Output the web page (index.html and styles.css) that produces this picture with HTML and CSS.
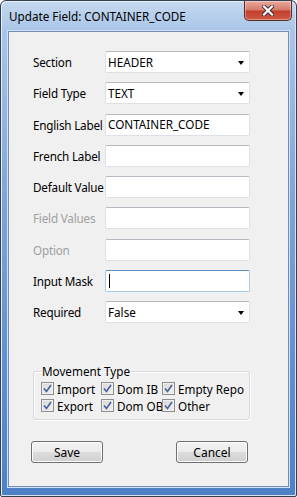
FILE: index.html
```html
<!DOCTYPE html>
<html lang="en">
<head>
    <meta charset="UTF-8">
    <meta name="viewport" content="width=device-width, initial-scale=1.0">
    <title>Update Field</title>
    <link rel="stylesheet" href="styles.css">
</head>
<body>
    <div class="window">
        <div class="titlebar">
            <span class="title">Update Field: CONTAINER_CODE</span>
            <button class="close" aria-label="Close">
                <svg width="12" height="11" viewBox="0 0 12 11">
                    <path d="M2 1.5 L10 9.5 M10 1.5 L2 9.5" stroke="#3b2a2a" stroke-width="4" stroke-linecap="square"/>
                    <path d="M2 1.5 L10 9.5 M10 1.5 L2 9.5" stroke="#fff" stroke-width="2.2" stroke-linecap="square"/>
                </svg>
            </button>
        </div>

        <div class="client">
            <div class="form">
                <div class="row">
                    <label class="label">Section</label>
                    <div class="field combo">HEADER<span class="arrow"></span></div>
                </div>
                <div class="row">
                    <label class="label">Field Type</label>
                    <div class="field combo">TEXT<span class="arrow"></span></div>
                </div>
                <div class="row">
                    <label class="label">English Label</label>
                    <div class="field">CONTAINER_CODE</div>
                </div>
                <div class="row">
                    <label class="label">French Label</label>
                    <div class="field"></div>
                </div>
                <div class="row">
                    <label class="label">Default Value</label>
                    <div class="field"></div>
                </div>
                <div class="row">
                    <label class="label disabled">Field Values</label>
                    <div class="field"></div>
                </div>
                <div class="row">
                    <label class="label disabled">Option</label>
                    <div class="field"></div>
                </div>
                <div class="row">
                    <label class="label">Input Mask</label>
                    <div class="field focused"><span class="caret"></span></div>
                </div>
                <div class="row">
                    <label class="label">Required</label>
                    <div class="field combo">False<span class="arrow"></span></div>
                </div>
            </div>

            <fieldset class="group">
                <legend>Movement Type</legend>
                <div class="checks">
                    <label class="check"><span class="box"><svg width="9" height="9" viewBox="0 0 9 9"><path d="M1 4.5 L3.5 7.5 L8 1" fill="none" stroke="#4a5f9a" stroke-width="1.6"/></svg></span>Import</label>
                    <label class="check"><span class="box"><svg width="9" height="9" viewBox="0 0 9 9"><path d="M1 4.5 L3.5 7.5 L8 1" fill="none" stroke="#4a5f9a" stroke-width="1.6"/></svg></span>Dom IB</label>
                    <label class="check"><span class="box"><svg width="9" height="9" viewBox="0 0 9 9"><path d="M1 4.5 L3.5 7.5 L8 1" fill="none" stroke="#4a5f9a" stroke-width="1.6"/></svg></span>Empty Repo</label>
                    <label class="check"><span class="box"><svg width="9" height="9" viewBox="0 0 9 9"><path d="M1 4.5 L3.5 7.5 L8 1" fill="none" stroke="#4a5f9a" stroke-width="1.6"/></svg></span>Export</label>
                    <label class="check"><span class="box"><svg width="9" height="9" viewBox="0 0 9 9"><path d="M1 4.5 L3.5 7.5 L8 1" fill="none" stroke="#4a5f9a" stroke-width="1.6"/></svg></span>Dom OB</label>
                    <label class="check"><span class="box"><svg width="9" height="9" viewBox="0 0 9 9"><path d="M1 4.5 L3.5 7.5 L8 1" fill="none" stroke="#4a5f9a" stroke-width="1.6"/></svg></span>Other</label>
                </div>
            </fieldset>

            <div class="buttons">
                <button class="button">Save</button>
                <button class="button">Cancel</button>
            </div>
        </div>
    </div>
</body>
</html>
```

FILE: styles.css
```css
body {
    margin: 0;
    background: #fff;
    font-family: "Noto Sans", "Open Sans", sans-serif;
    font-size: 11.7px;
    color: #000;
}

.window {
    box-sizing: border-box;
    width: 297px;
    height: 497px;
    display: flex;
    flex-direction: column;
    border: 1px solid #34404f;
    border-radius: 6px 6px 2px 2px;
    background: linear-gradient(to bottom, #c5d9f0 0, #a9c5e8 30px, #7ea5da 40%, #5f8fd0 75%, #4f80c6 100%);
    box-shadow: inset 1px 1px 0 #e4eef9, inset -1px -1px 0 #d6e4f5;
}

.titlebar {
    height: 30px;
    display: flex;
    align-items: flex-start;
    justify-content: space-between;
    padding-left: 8px;
    padding-right: 4px;
}

.title {
    margin-top: 7px;
    line-height: 16px;
    color: #000;
}

.close {
    width: 48px;
    height: 20px;
    padding: 0;
    border: 1px solid #5a2a24;
    border-top: none;
    border-radius: 0 0 5px 5px;
    background: linear-gradient(to bottom, #e8aa9e 0, #d77c6c 45%, #c3402d 55%, #cf5a44 100%);
    display: flex;
    align-items: center;
    justify-content: center;
    box-shadow: inset 0 0 0 1px rgba(255, 255, 255, 0.35);
}

.client {
    flex: 1;
    margin: 0 7px 9px;
    border: 1px solid #6f8db8;
    background: #f0f0f0;
    box-shadow: 0 0 0 1px #d3e1f3;
    padding: 19px 0 0 24px;
}

.form {
    display: flex;
    flex-direction: column;
    gap: 9.25px;
}

.row {
    display: flex;
    align-items: center;
    height: 22px;
}

.label {
    width: 72px;
    flex: none;
    white-space: nowrap;
    letter-spacing: -0.2px;
}

.label.disabled {
    color: #a0a0a0;
}

.field {
    box-sizing: border-box;
    position: relative;
    width: 145px;
    height: 22px;
    background: #fff;
    border: 1px solid #dde1e7;
    border-top-color: #b5b9c1;
    border-radius: 2px;
    padding-left: 2px;
    line-height: 19px;
    display: flex;
    align-items: center;
}

.field.focused {
    border-color: #a9cbe6;
    border-top-color: #5b8fbd;
}

.caret {
    width: 1px;
    height: 14px;
    background: #000;
    margin-left: 1px;
}

.combo {
    padding-left: 2px;
}

.arrow {
    position: absolute;
    right: 5px;
    top: 9px;
    width: 0;
    height: 0;
    border-left: 3.5px solid transparent;
    border-right: 3.5px solid transparent;
    border-top: 4px solid #000;
}

.group {
    box-sizing: border-box;
    width: 217px;
    margin: 41px 0 0 0;
    padding: 1px 0 6px 7px;
    border: 1px solid #d3d9df;
    border-radius: 3px;
    box-shadow: inset 1px 1px 0 #fff, 1px 1px 0 #fff;
}

.group legend {
    padding: 0 1px;
    margin-left: 0;
    line-height: 15px;
}

.checks {
    display: grid;
    grid-template-columns: 60px 61px auto;
    row-gap: 2px;
    margin-top: 1px;
}

.check {
    display: flex;
    align-items: center;
    gap: 3px;
    height: 15px;
    white-space: nowrap;
}

.box {
    box-sizing: border-box;
    width: 13px;
    height: 13px;
    flex: none;
    border: 1px solid #8e8f8f;
    background: linear-gradient(135deg, #d6d6d6, #f2f2f2);
    box-shadow: inset 0 0 0 1px #eeeeee;
    display: flex;
    align-items: center;
    justify-content: center;
}

.buttons {
    display: flex;
    gap: 73px;
    margin: 21px 0 0 -2px;
}

.button {
    width: 72px;
    height: 22px;
    padding: 0;
    font-family: inherit;
    font-size: 12px;
    color: #000;
    border: 1px solid #707070;
    border-radius: 3px;
    background: linear-gradient(to bottom, #f2f2f2 0, #ebebeb 50%, #dddddd 50%, #cfcfcf 100%);
    box-shadow: inset 0 0 0 1px #fcfcfc;
}
```
